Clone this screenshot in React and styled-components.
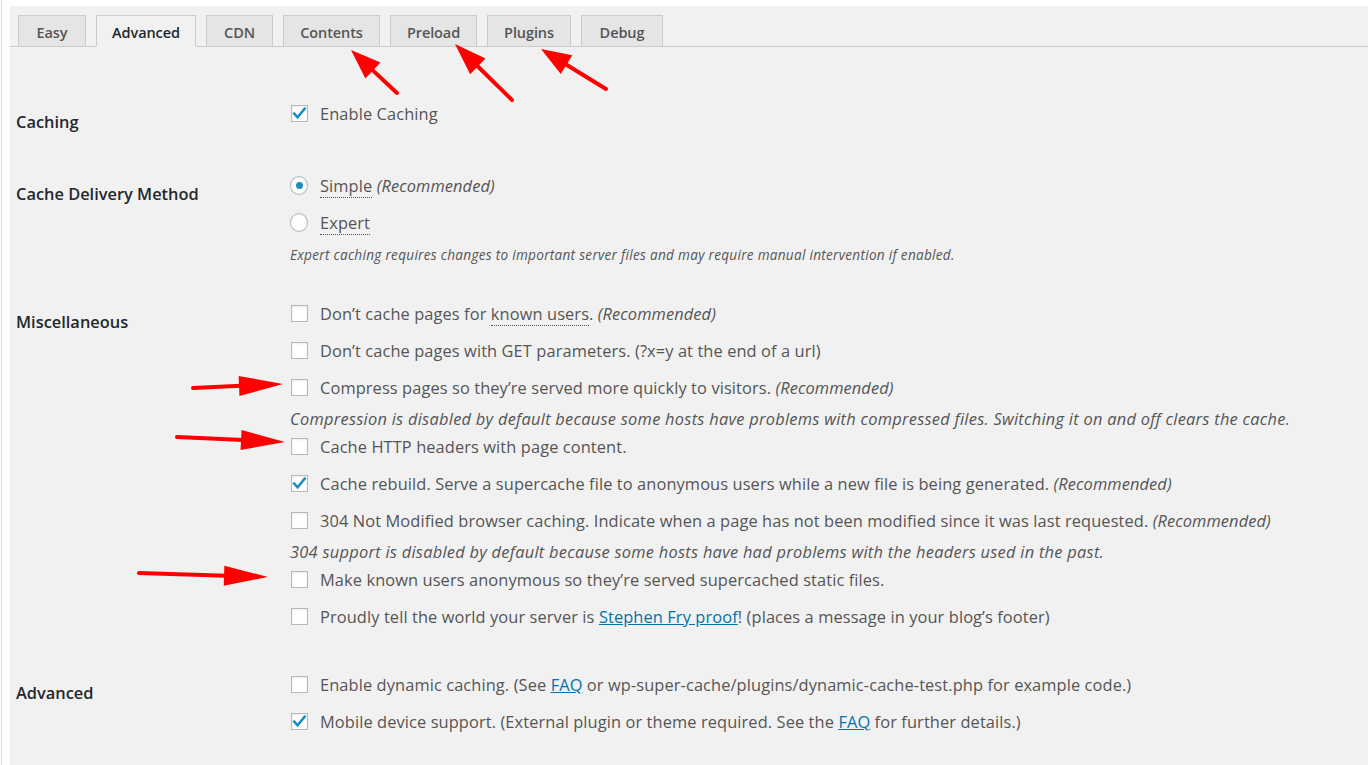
import React from "react";
import styled, { createGlobalStyle, css } from "styled-components";

const Global = createGlobalStyle`
  html, body { margin: 0; padding: 0; background: #ffffff; }
  body { font-family: "Open Sans", "Noto Sans", "Liberation Sans", sans-serif; }
  * { box-sizing: border-box; }
`;

const Frame = styled.div`
  position: relative;
  width: 1368px;
  height: 765px;
  overflow: hidden;
  background: #fff;
  padding: 6px 0 0 10px;
  &::before {
    content: "";
    position: absolute;
    left: 1px;
    top: 0;
    bottom: 0;
    width: 1px;
    background: #dcdcdc;
  }
`;

const Panel = styled.div`
  background: #f1f1f1;
  height: 100%;
`;

const TabBar = styled.div`
  display: flex;
  gap: 10px;
  padding: 9px 0 0 8px;
  border-bottom: 1px solid #cccccc;
`;

const Tab = styled.div`
  width: ${(p) => p.$w}px;
  height: 32px;
  margin-bottom: -1px;
  padding-top: 3px;
  display: flex;
  align-items: center;
  justify-content: center;
  border: 1px solid #cccccc;
  background: #e5e5e5;
  color: #555;
  font-size: 14.5px;
  font-weight: 600;
  letter-spacing: -0.1px;
  ${(p) =>
    p.$active &&
    css`
      background: #f1f1f1;
      border-bottom-color: #f1f1f1;
      color: #23282d;
    `}
`;

const Form = styled.div`
  padding-left: 6px;
`;

const Section = styled.div`
  display: grid;
  grid-template-columns: 274px 1fr;
  padding-top: ${(p) => p.$top}px;
`;

const Label = styled.div`
  padding-top: 17px;
  line-height: 20px;
  font-size: 16.4px;
  font-weight: 600;
  color: #23282d;
`;

const Options = styled.div`
  display: flex;
  flex-direction: column;
`;

const Row = styled.div`
  height: 37px;
  display: flex;
  align-items: center;
  gap: 12px;
  font-size: 16.4px;
  letter-spacing: 0.1px;
  color: #555;
  white-space: nowrap;
`;

const ControlSlot = styled.span`
  width: 18px;
  height: 18px;
  display: flex;
  align-items: center;
  justify-content: center;
  flex: none;
`;

const Box = styled.span`
  position: relative;
  width: 17px;
  height: 17px;
  background: #fff;
  border: 1px solid #b4b9be;
  box-shadow: inset 0 1px 2px rgba(0, 0, 0, 0.08);
  display: flex;
  align-items: center;
  justify-content: center;
`;

const Radio = styled.span`
  width: 19px;
  height: 19px;
  border-radius: 50%;
  background: #fff;
  border: 1px solid #b4b9be;
  box-shadow: inset 0 1px 2px rgba(0, 0, 0, 0.08);
  display: flex;
  align-items: center;
  justify-content: center;
  &::after {
    content: "";
    display: ${(p) => (p.$on ? "block" : "none")};
    width: 7px;
    height: 7px;
    border-radius: 50%;
    background: #1e8cbe;
  }
`;

const Note = styled.div`
  height: 22px;
  line-height: 26px;
  font-size: 16.4px;
  letter-spacing: 0.27px;
  font-style: italic;
  color: #555;
  white-space: nowrap;
  ${(p) =>
    p.$small &&
    css`
      margin-top: 3px;
      line-height: 22px;
      font-size: 13.6px;
      letter-spacing: 0.28px;
    `}
`;

const Em = styled.i`
  font-style: italic;
`;

const Abbr = styled.span`
  border-bottom: 1px dotted #555;
  line-height: 1.1;
`;

const Link = styled.a`
  color: #0073aa;
  text-decoration: underline;
`;

const Overlay = styled.svg`
  position: absolute;
  left: 0;
  top: 0;
  pointer-events: none;
`;

function Check({ on }) {
  return (
    <ControlSlot>
      <Box>
        {on && (
          <svg width="15" height="13" viewBox="0 0 15 13">
            <path
              d="M2.2 6.6 L5.6 10.3 L12.6 1.8"
              fill="none"
              stroke="#1e8cbe"
              strokeWidth="2.6"
              strokeLinecap="square"
            />
          </svg>
        )}
      </Box>
    </ControlSlot>
  );
}

function RadioCtl({ on }) {
  return (
    <ControlSlot>
      <Radio $on={on} />
    </ControlSlot>
  );
}

function Arrow({ from, to, head = 40, width = 20, stroke = 4 }) {
  const [x1, y1] = from;
  const [x2, y2] = to;
  const dx = x2 - x1;
  const dy = y2 - y1;
  const len = Math.hypot(dx, dy);
  const ux = dx / len;
  const uy = dy / len;
  const bx = x2 - ux * head;
  const by = y2 - uy * head;
  const px = -uy * (width / 2);
  const py = ux * (width / 2);
  return (
    <g>
      <line
        x1={x1}
        y1={y1}
        x2={bx + ux * 2}
        y2={by + uy * 2}
        stroke="#f00"
        strokeWidth={stroke}
        strokeLinecap="round"
      />
      <polygon
        points={`${x2},${y2} ${bx + px},${by + py} ${bx - px},${by - py}`}
        fill="#f00"
      />
    </g>
  );
}

const tabs = [
  { name: "Easy", w: 68 },
  { name: "Advanced", w: 100 },
  { name: "CDN", w: 67 },
  { name: "Contents", w: 97 },
  { name: "Preload", w: 87 },
  { name: "Plugins", w: 84 },
  { name: "Debug", w: 82 },
];

export default function App() {
  return (
    <>
      <Global />
      <Frame>
        <Panel>
          <TabBar>
            {tabs.map((t) => (
              <Tab key={t.name} $w={t.w} $active={t.name === "Advanced"}>
                {t.name}
              </Tab>
            ))}
          </TabBar>
          <Form>
            <Section $top={48}>
              <Label>Caching</Label>
              <Options>
                <Row>
                  <Check on />
                  <span>Enable Caching</span>
                </Row>
              </Options>
            </Section>

            <Section $top={35}>
              <Label>Cache Delivery Method</Label>
              <Options>
                <Row>
                  <RadioCtl on />
                  <span>
                    <Abbr>Simple</Abbr> <Em>(Recommended)</Em>
                  </span>
                </Row>
                <Row>
                  <RadioCtl />
                  <span>
                    <Abbr>Expert</Abbr>
                  </span>
                </Row>
                <Note $small>
                  Expert caching requires changes to important server files and may require
                  manual intervention if enabled.
                </Note>
              </Options>
            </Section>

            <Section $top={29}>
              <Label>Miscellaneous</Label>
              <Options>
                <Row>
                  <Check />
                  <span>
                    Don’t cache pages for <Abbr>known users</Abbr>. <Em>(Recommended)</Em>
                  </span>
                </Row>
                <Row>
                  <Check />
                  <span>Don’t cache pages with GET parameters. (?x=y at the end of a url)</span>
                </Row>
                <Row>
                  <Check />
                  <span>
                    Compress pages so they’re served more quickly to visitors.{" "}
                    <Em>(Recommended)</Em>
                  </span>
                </Row>
                <Note>
                  Compression is disabled by default because some hosts have problems with
                  compressed files. Switching it on and off clears the cache.
                </Note>
                <Row>
                  <Check />
                  <span>Cache HTTP headers with page content.</span>
                </Row>
                <Row>
                  <Check on />
                  <span>
                    Cache rebuild. Serve a supercache file to anonymous users while a new file
                    is being generated. <Em>(Recommended)</Em>
                  </span>
                </Row>
                <Row>
                  <Check />
                  <span>
                    304 Not Modified browser caching. Indicate when a page has not been
                    modified since it was last requested. <Em>(Recommended)</Em>
                  </span>
                </Row>
                <Note>
                  304 support is disabled by default because some hosts have had problems with
                  the headers used in the past.
                </Note>
                <Row>
                  <Check />
                  <span>Make known users anonymous so they’re served supercached static files.</span>
                </Row>
                <Row>
                  <Check />
                  <span>
                    Proudly tell the world your server is <Link>Stephen Fry proof</Link>!
                    (places a message in your blog’s footer)
                  </span>
                </Row>
              </Options>
            </Section>

            <Section $top={31}>
              <Label>Advanced</Label>
              <Options>
                <Row>
                  <Check />
                  <span>
                    Enable dynamic caching. (See <Link>FAQ</Link> or
                    wp-super-cache/plugins/dynamic-cache-test.php for example code.)
                  </span>
                </Row>
                <Row>
                  <Check on />
                  <span>
                    Mobile device support. (External plugin or theme required. See the{" "}
                    <Link>FAQ</Link> for further details.)
                  </span>
                </Row>
              </Options>
            </Section>
          </Form>
        </Panel>
        <Overlay width="1368" height="765" viewBox="0 0 1368 765">
          <Arrow from={[397, 93]} to={[351, 50]} head={30} width={22} />
          <Arrow from={[512, 100]} to={[455, 44]} head={32} width={22} />
          <Arrow from={[606, 89]} to={[541, 49]} head={30} width={22} />
          <Arrow from={[193, 388]} to={[283, 384]} head={44} width={20} />
          <Arrow from={[177, 437]} to={[285, 442]} head={44} width={20} />
          <Arrow from={[139, 573]} to={[268, 577]} head={44} width={20} />
        </Overlay>
      </Frame>
    </>
  );
}
